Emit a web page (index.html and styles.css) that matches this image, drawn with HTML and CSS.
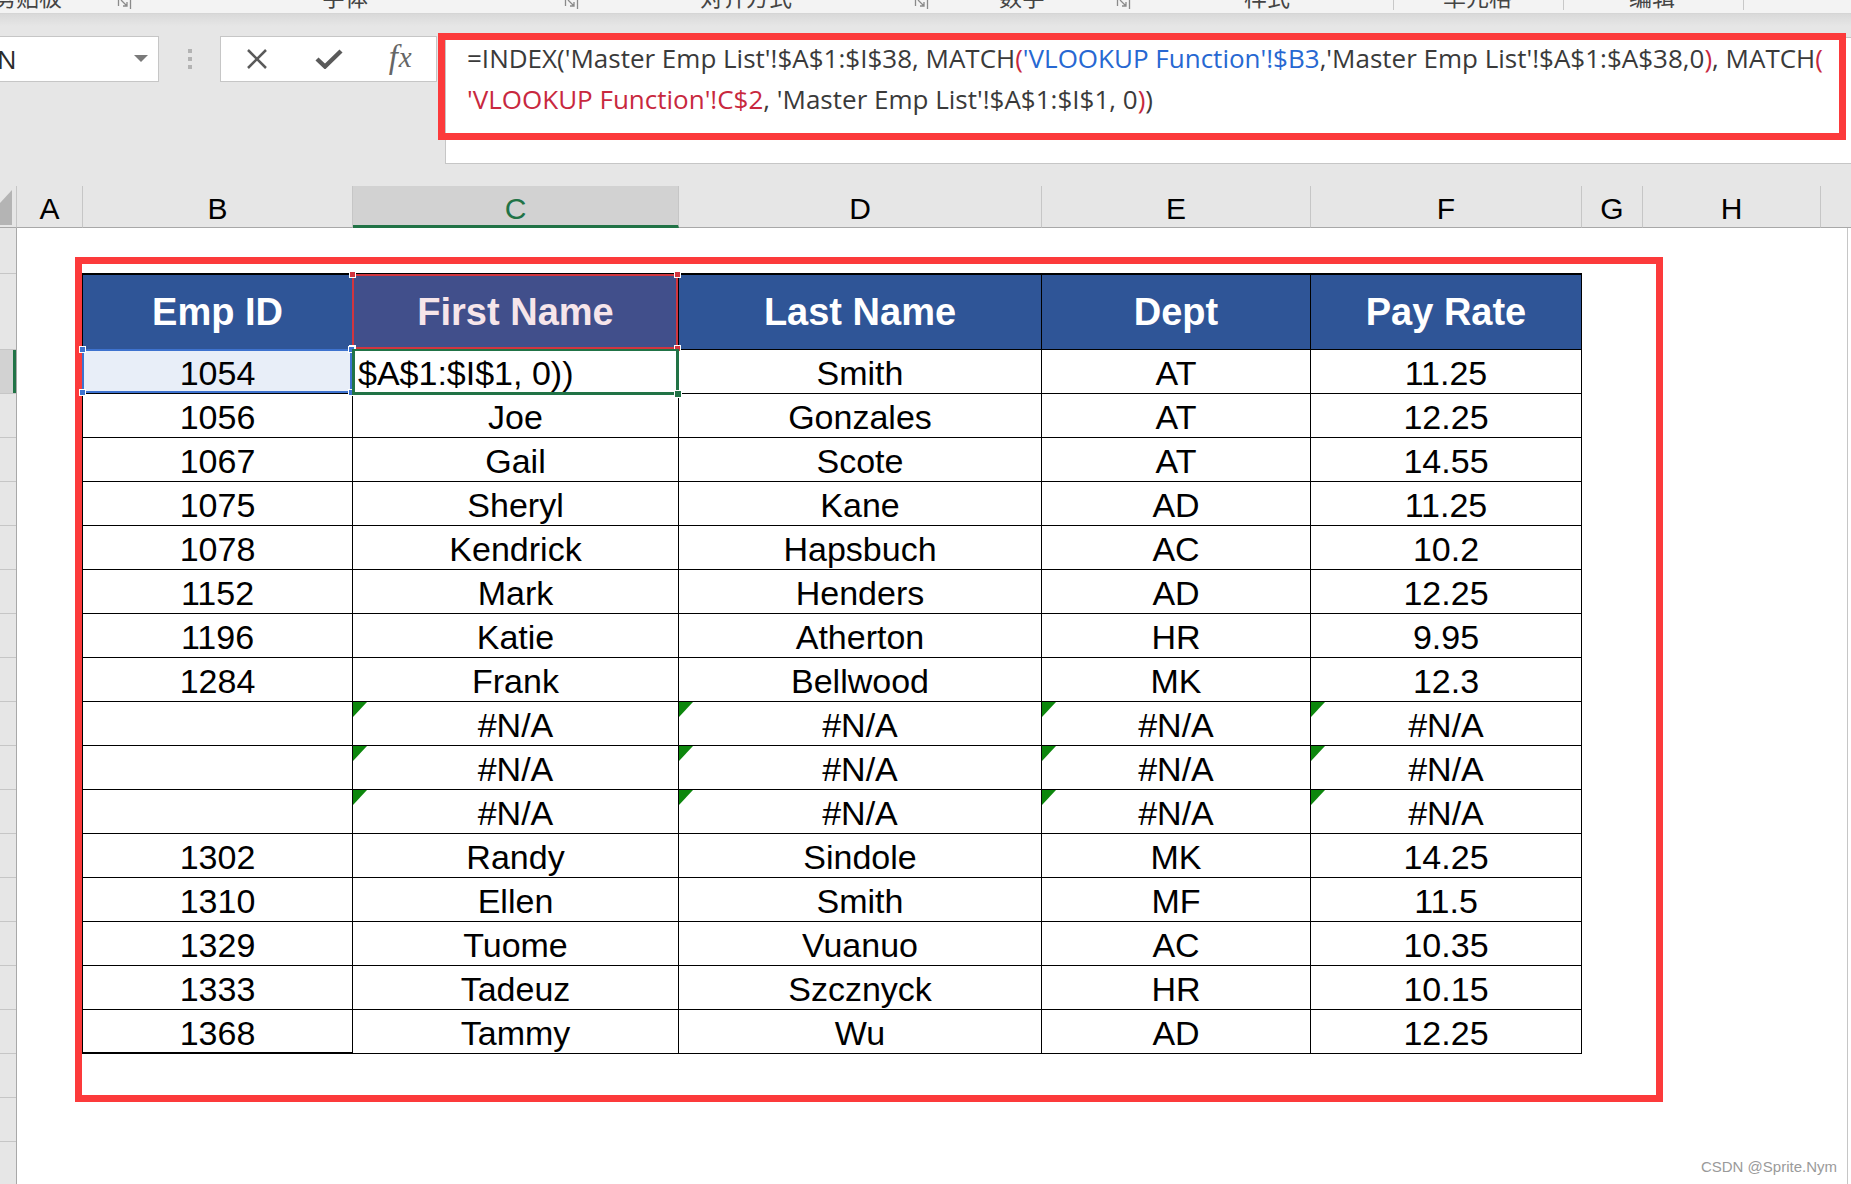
FILE: index.html
```html
<!DOCTYPE html>
<html lang="zh-CN">
<head>
<meta charset="utf-8">
<title>Excel - INDEX MATCH</title>
<link rel="stylesheet" href="styles.css">
</head>
<body>
<div class="ribbon">
  <span class="rl m1">剪贴板</span>
  <span class="launcher m2"><svg width="16" height="10" viewBox="0 0 16 10"><path d="M1.5 0V6M4 0L10 6M6 6H10V2M13.5 0V9" fill="none" stroke="#8a8a8a" stroke-width="1.3"/></svg></span>
  <span class="rl m3">字体</span>
  <span class="launcher m4"><svg width="16" height="10" viewBox="0 0 16 10"><path d="M1.5 0V6M4 0L10 6M6 6H10V2M13.5 0V9" fill="none" stroke="#8a8a8a" stroke-width="1.3"/></svg></span>
  <span class="rl m5">对齐方式</span>
  <span class="launcher m6"><svg width="16" height="10" viewBox="0 0 16 10"><path d="M1.5 0V6M4 0L10 6M6 6H10V2M13.5 0V9" fill="none" stroke="#8a8a8a" stroke-width="1.3"/></svg></span>
  <span class="rl m7">数字</span>
  <span class="launcher m8"><svg width="16" height="10" viewBox="0 0 16 10"><path d="M1.5 0V6M4 0L10 6M6 6H10V2M13.5 0V9" fill="none" stroke="#8a8a8a" stroke-width="1.3"/></svg></span>
  <span class="rl m9">样式</span>
  <span class="rsep m10"></span>
  <span class="rl m11">单元格</span>
  <span class="rsep m12"></span>
  <span class="rl m13">编辑</span>
  <span class="rsep m14"></span>
</div>

<div class="fbar">
  <div class="namebox"><span class="nb-text">N</span><span class="nb-arrow"></span></div>
  <div class="grip"><i></i><i></i><i></i></div>
  <div class="btnbox">
    <span class="btn"><svg width="24" height="20" viewBox="0 0 24 20"><path d="M3 1L21 19M21 1L3 19" stroke="#5a5a5a" stroke-width="2.5" fill="none"/></svg></span>
    <span class="btn"><svg width="28" height="20" viewBox="0 0 28 20"><path d="M2 10L10 17.5L26 2" stroke="#5a5a5a" stroke-width="4.4" fill="none"/></svg></span>
    <span class="btn fx"><i>f</i><i class="x">x</i></span>
  </div>
  <div class="formula">
    <div class="fline">=INDEX('Master Emp List'!$A$1:$I$38, MATCH<span class="r">(</span><span class="b">'VLOOKUP Function'!$B3</span>,'Master Emp List'!$A$1:$A$38,0<span class="r">)</span>, MATCH<span class="r">(</span></div>
    <div class="fline"><span class="r">'VLOOKUP Function'!C$2</span>, 'Master Emp List'!$A$1:$I$1, 0<span class="r">)</span>)</div>
    <div class="annot"></div>
  </div>
</div>

<div class="colheads">
  <div class="corner"><span class="tri"></span></div>
  <div class="ch cA">A</div>
  <div class="ch cB">B</div>
  <div class="ch cC sel">C</div>
  <div class="ch cD">D</div>
  <div class="ch cE">E</div>
  <div class="ch cF">F</div>
  <div class="ch cG">G</div>
  <div class="ch cH">H</div>
  <div class="ch cI"></div>
</div>

<div class="sheetbody">
  <div class="rowheads">
    <div class="rh r1"></div>
    <div class="rh r2"></div>
    <div class="rh sel"></div>
    <div class="rh"></div><div class="rh"></div><div class="rh"></div><div class="rh"></div>
    <div class="rh"></div><div class="rh"></div><div class="rh"></div><div class="rh"></div>
    <div class="rh"></div><div class="rh"></div><div class="rh"></div><div class="rh"></div>
    <div class="rh"></div><div class="rh"></div><div class="rh"></div><div class="rh"></div>
    <div class="rh"></div><div class="rh"></div><div class="rh"></div>
  </div>
  <div class="cells">
    <div class="refbox">
      <div class="tbl">
        <div class="hc">Emp ID</div>
        <div class="hc refr">First Name<span class="h tl"></span><span class="h tr"></span><span class="h bl"></span><span class="h br"></span></div>
        <div class="hc">Last Name</div>
        <div class="hc">Dept</div>
        <div class="hc">Pay Rate</div>

        <div class="dc refb">1054<span class="h tl"></span><span class="h tr"></span><span class="h bl"></span><span class="h br"></span></div>
        <div class="dc active">$A$1:$I$1, 0))<span class="fill"></span></div>
        <div class="dc">Smith</div><div class="dc">AT</div><div class="dc">11.25</div>

        <div class="dc">1056</div><div class="dc">Joe</div><div class="dc">Gonzales</div><div class="dc">AT</div><div class="dc">12.25</div>
        <div class="dc">1067</div><div class="dc">Gail</div><div class="dc">Scote</div><div class="dc">AT</div><div class="dc">14.55</div>
        <div class="dc">1075</div><div class="dc">Sheryl</div><div class="dc">Kane</div><div class="dc">AD</div><div class="dc">11.25</div>
        <div class="dc">1078</div><div class="dc">Kendrick</div><div class="dc">Hapsbuch</div><div class="dc">AC</div><div class="dc">10.2</div>
        <div class="dc">1152</div><div class="dc">Mark</div><div class="dc">Henders</div><div class="dc">AD</div><div class="dc">12.25</div>
        <div class="dc">1196</div><div class="dc">Katie</div><div class="dc">Atherton</div><div class="dc">HR</div><div class="dc">9.95</div>
        <div class="dc">1284</div><div class="dc">Frank</div><div class="dc">Bellwood</div><div class="dc">MK</div><div class="dc">12.3</div>
        <div class="dc"></div><div class="dc err">#N/A</div><div class="dc err">#N/A</div><div class="dc err">#N/A</div><div class="dc err">#N/A</div>
        <div class="dc"></div><div class="dc err">#N/A</div><div class="dc err">#N/A</div><div class="dc err">#N/A</div><div class="dc err">#N/A</div>
        <div class="dc"></div><div class="dc err">#N/A</div><div class="dc err">#N/A</div><div class="dc err">#N/A</div><div class="dc err">#N/A</div>
        <div class="dc">1302</div><div class="dc">Randy</div><div class="dc">Sindole</div><div class="dc">MK</div><div class="dc">14.25</div>
        <div class="dc">1310</div><div class="dc">Ellen</div><div class="dc">Smith</div><div class="dc">MF</div><div class="dc">11.5</div>
        <div class="dc">1329</div><div class="dc">Tuome</div><div class="dc">Vuanuo</div><div class="dc">AC</div><div class="dc">10.35</div>
        <div class="dc">1333</div><div class="dc">Tadeuz</div><div class="dc">Szcznyck</div><div class="dc">HR</div><div class="dc">10.15</div>
        <div class="dc thick">1368</div><div class="dc">Tammy</div><div class="dc">Wu</div><div class="dc">AD</div><div class="dc">12.25</div>
      </div>
    </div>
  </div>
  <div class="vscroll"></div>
</div>

<div class="wm">CSDN @Sprite.Nym</div>
</body>
</html>
```

FILE: styles.css
```css
* { box-sizing: border-box; }
html, body { margin: 0; padding: 0; }
body {
  width: 1851px;
  height: 1184px;
  overflow: hidden;
  position: relative;
  background: #e6e6e6;
  font-family: "Liberation Sans", Arial, sans-serif;
}

/* ribbon group labels (cut at top) */
.ribbon {
  height: 14px;
  background: #f3f3f3;
  border-bottom: 1px solid #d5d5d5;
  display: flex;
  align-items: flex-start;
  overflow: hidden;
}
.rl {
  flex: none;
  font-family: "Noto Sans CJK SC", sans-serif;
  font-size: 23px;
  line-height: 23px;
  margin-top: -15px;
  color: #444;
  white-space: nowrap;
}
.launcher { flex: none; width: 16px; height: 10px; display: block; }
.launcher svg { display: block; }
.rsep { flex: none; width: 1px; height: 10px; background: #c8c8c8; }
.m1 { margin-left: -7px; }
.m2 { margin-left: 55px; }
.m3 { margin-left: 189px; }
.m4 { margin-left: 196px; }
.m5 { margin-left: 120px; }
.m6 { margin-left: 122px; }
.m7 { margin-left: 69px; }
.m8 { margin-left: 71px; }
.m9 { margin-left: 112px; }
.m10 { margin-left: 103px; }
.m11 { margin-left: 49px; }
.m12 { margin-left: 51px; }
.m13 { margin-left: 65px; }
.m14 { margin-left: 68px; }

/* formula bar */
.fbar {
  height: 172px;
  display: flex;
  align-items: flex-start;
  padding-top: 22px;
  background: linear-gradient(#d9d9d9, #e6e6e6 12px);
}
.namebox {
  flex: none;
  position: relative;
  width: 160px;
  height: 46px;
  margin-left: -1px;
  background: #fff;
  border: 1px solid #c6c6c6;
}
.nb-text {
  display: block;
  padding-top: 9px;
  margin-left: -3px;
  font-family: "Open Sans", sans-serif;
  font-size: 26px;
  line-height: 26px;
  color: #2b2b2b;
}
.nb-arrow {
  position: absolute;
  left: 134px;
  top: 18px;
  width: 0;
  height: 0;
  border-left: 7px solid transparent;
  border-right: 7px solid transparent;
  border-top: 7px solid #7a7a7a;
}
.grip {
  flex: none;
  width: 5px;
  margin-left: 29px;
  margin-top: 13px;
  display: flex;
  flex-direction: column;
  gap: 4px;
}
.grip i { display: block; width: 4px; height: 4px; background: #b3b3b3; }
.btnbox {
  flex: none;
  width: 217px;
  height: 46px;
  margin-left: 27px;
  background: #fff;
  border: 1px solid #c6c6c6;
  display: flex;
}
.btn {
  flex: 1;
  display: flex;
  align-items: center;
  justify-content: center;
}
.btn svg { display: block; }
.fx {
  font-family: "Liberation Serif", serif;
  font-style: italic;
  font-size: 33px;
  color: #666;
  padding-bottom: 4px;
}
.fx i { font-style: italic; }
.fx .x { font-size: 29px; margin-left: 1px; }

.formula {
  flex: 1;
  position: relative;
  height: 127px;
  margin-top: 1px;
  margin-left: 8px;
  background: #fff;
  border: 1px solid #c6c6c6;
  border-right: none;
  padding-left: 21px;
}
.fline {
  font-family: "Open Sans", sans-serif;
  font-size: 26px;
  line-height: 41px;
  color: #3a3a3a;
  white-space: pre;
}
.fline .r { color: #c8283e; }
.fline .b { color: #2768d2; }
.annot {
  position: absolute;
  left: -8px;
  top: -5px;
  width: 1408px;
  height: 107px;
  border: 7px solid #fc3a3b;
}

/* column headers */
.colheads {
  height: 42px;
  display: flex;
  background: #e6e6e6;
}
.corner {
  flex: none;
  width: 17px;
  border-right: 1px solid #c6c6c6;
  border-bottom: 1px solid #a8a8a8;
  padding-top: 4px;
}
.tri {
  display: block;
  width: 12px;
  height: 35px;
  background: #b4b4b4;
  clip-path: polygon(100% 0, 100% 100%, 0 100%, 0 37%);
}
.ch {
  flex: none;
  border-right: 1px solid #c6c6c6;
  border-bottom: 1px solid #a8a8a8;
  font-size: 30px;
  line-height: 36px;
  padding-top: 5px;
  text-align: center;
  color: #000;
}
.ch.sel {
  background: #d2d2d2;
  color: #217346;
  border-bottom: 3px solid #217346;
}
.cA { width: 66px; }
.cB { width: 270px; }
.cC { width: 326px; }
.cD { width: 363px; }
.cE { width: 269px; }
.cF { width: 271px; }
.cG { width: 61px; }
.cH { width: 178px; }
.cI { flex: 1; border-right: none; }

/* sheet body */
.sheetbody {
  height: 956px;
  display: flex;
  overflow: hidden;
}
.rowheads {
  flex: none;
  width: 17px;
  border-right: 1px solid #a8a8a8;
  background: #e6e6e6;
}
.rh { height: 44px; border-bottom: 1px solid #c6c6c6; }
.rh.r1 { height: 46px; }
.rh.r2 { height: 76px; }
.rh.sel { background: #d2d2d2; box-shadow: inset -3px 0 #217346; }
.cells { flex: 1; background: #fff; }
.vscroll { flex: none; width: 4px; background: #fff; border-left: 1px solid #c6c6c6; }

.refbox {
  width: 1588px;
  margin-left: 58px;
  margin-top: 29px;
  border: 7px solid #fc3a3b;
  padding: 9px 74px 41px 0;
}
.tbl {
  width: 1500px;
  display: grid;
  grid-template-columns: 270px 326px 363px 269px 271px;
  border-left: 1px solid #000;
  border-top: 2px solid #000;
}
.hc {
  position: relative;
  height: 75px;
  background: #2f5597;
  color: #fff;
  font-weight: bold;
  font-size: 38px;
  line-height: 74px;
  text-align: center;
  border-right: 1px solid #000;
  border-bottom: 1px solid #000;
  white-space: nowrap;
}
.dc {
  position: relative;
  height: 44px;
  padding-top: 3px;
  font-size: 34px;
  line-height: 40px;
  text-align: center;
  color: #000;
  border-right: 1px solid #000;
  border-bottom: 1px solid #000;
  white-space: nowrap;
}
.dc.thick { border-bottom: 2px solid #000; }

/* error indicator */
.err::before {
  content: "";
  position: absolute;
  left: 0;
  top: 0;
  width: 14px;
  height: 15px;
  background: #0d870d;
  clip-path: polygon(0 0, 100% 0, 0 100%);
}

/* reference highlight C2 (red) */
.hc.refr { background: #414f8b; color: #f6e5ea; z-index: 2; }
.hc.refr::after {
  content: "";
  position: absolute;
  left: -1px; top: -1px; right: 0; bottom: 0;
  border: 2px solid #d1353f;
}
.h {
  position: absolute;
  width: 7px;
  height: 7px;
  border: 1px solid #fff;
  z-index: 1;
}
.refr .h { background: #d1353f; }
.refb .h { background: #3d72cf; }
.h.tl { left: -4px; top: -4px; }
.h.tr { right: -3px; top: -4px; }
.h.bl { left: -4px; bottom: -3px; }
.h.br { right: -3px; bottom: -3px; }

/* reference highlight B3 (blue) */
.dc.refb { background: #e8eef8; z-index: 2; }
.dc.refb::after {
  content: "";
  position: absolute;
  left: -1px; top: -1px; right: 0; bottom: 0;
  border: 2px solid #3d72cf;
}

/* active cell C3 */
.dc.active { text-align: left; padding-left: 5px; z-index: 3; }
.dc.active::after {
  content: "";
  position: absolute;
  left: -1px; top: -1px; right: -1px; bottom: -2px;
  border: 3px solid #217346;
  border-top-width: 2px;
}
.fill {
  position: absolute;
  right: -4px;
  bottom: -5px;
  width: 8px;
  height: 8px;
  background: #217346;
  border: 1px solid #fff;
  z-index: 1;
}

.wm {
  position: absolute;
  right: 14px;
  bottom: 9px;
  font-size: 15px;
  color: #9a9a9a;
  font-family: "Liberation Sans", Arial, sans-serif;
}
```
